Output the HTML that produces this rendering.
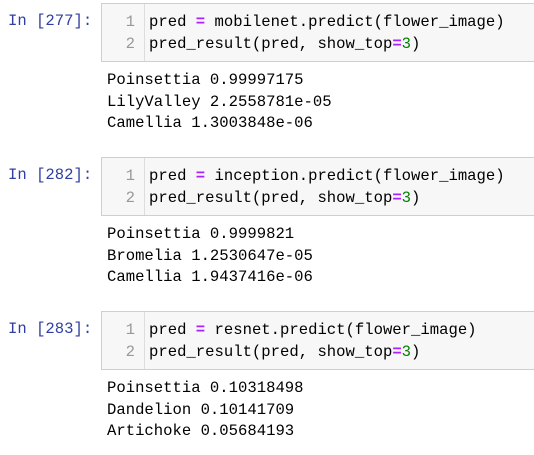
<!DOCTYPE html><html><head><style>
body{margin:0;width:534px;height:455px;background:#fff;overflow:hidden;font-family:"Liberation Mono",monospace;font-size:15.6px;position:relative}
.p{position:absolute;left:8px;color:#303f9f;line-height:22px}
.box{position:absolute;left:101px;width:450px;height:57px;background:#f7f7f7;border:1px solid #cfcfcf}
.g{position:absolute;left:0;top:0;width:43px;height:57px;border-right:1px solid #ddd;color:#999;text-align:right}
.g div,.c div{height:22px;line-height:22px}
.g div{padding-right:9px}
.c{position:absolute;left:47px;top:7px;color:#000;white-space:pre}
.g{padding-top:7px;box-sizing:border-box}
.o{position:absolute;left:107px;white-space:pre;line-height:21.7px;color:#000}
.k{color:#aa22ff;font-weight:bold}.n{color:#008000}
</style></head><body>
<div class="p" style="top:10px">In [277]:</div>
<div class="box" style="top:3px"><div class="g"><div>1</div><div>2</div></div><div class="c"><div>pred <span class="k">=</span> mobilenet.predict(flower_image)</div><div>pred_result(pred, show_top<span class="k">=</span><span class="n">3</span>)</div></div></div>
<div class="o" style="top:70px">Poinsettia 0.99997175
LilyValley 2.2558781e-05
Camellia 1.3003848e-06</div>
<div class="p" style="top:164px">In [282]:</div>
<div class="box" style="top:157px"><div class="g"><div>1</div><div>2</div></div><div class="c"><div>pred <span class="k">=</span> inception.predict(flower_image)</div><div>pred_result(pred, show_top<span class="k">=</span><span class="n">3</span>)</div></div></div>
<div class="o" style="top:224px">Poinsettia 0.9999821
Bromelia 1.2530647e-05
Camellia 1.9437416e-06</div>
<div class="p" style="top:318px">In [283]:</div>
<div class="box" style="top:311px"><div class="g"><div>1</div><div>2</div></div><div class="c"><div>pred <span class="k">=</span> resnet.predict(flower_image)</div><div>pred_result(pred, show_top<span class="k">=</span><span class="n">3</span>)</div></div></div>
<div class="o" style="top:378px">Poinsettia 0.10318498
Dandelion 0.10141709
Artichoke 0.05684193</div>
</body></html>
